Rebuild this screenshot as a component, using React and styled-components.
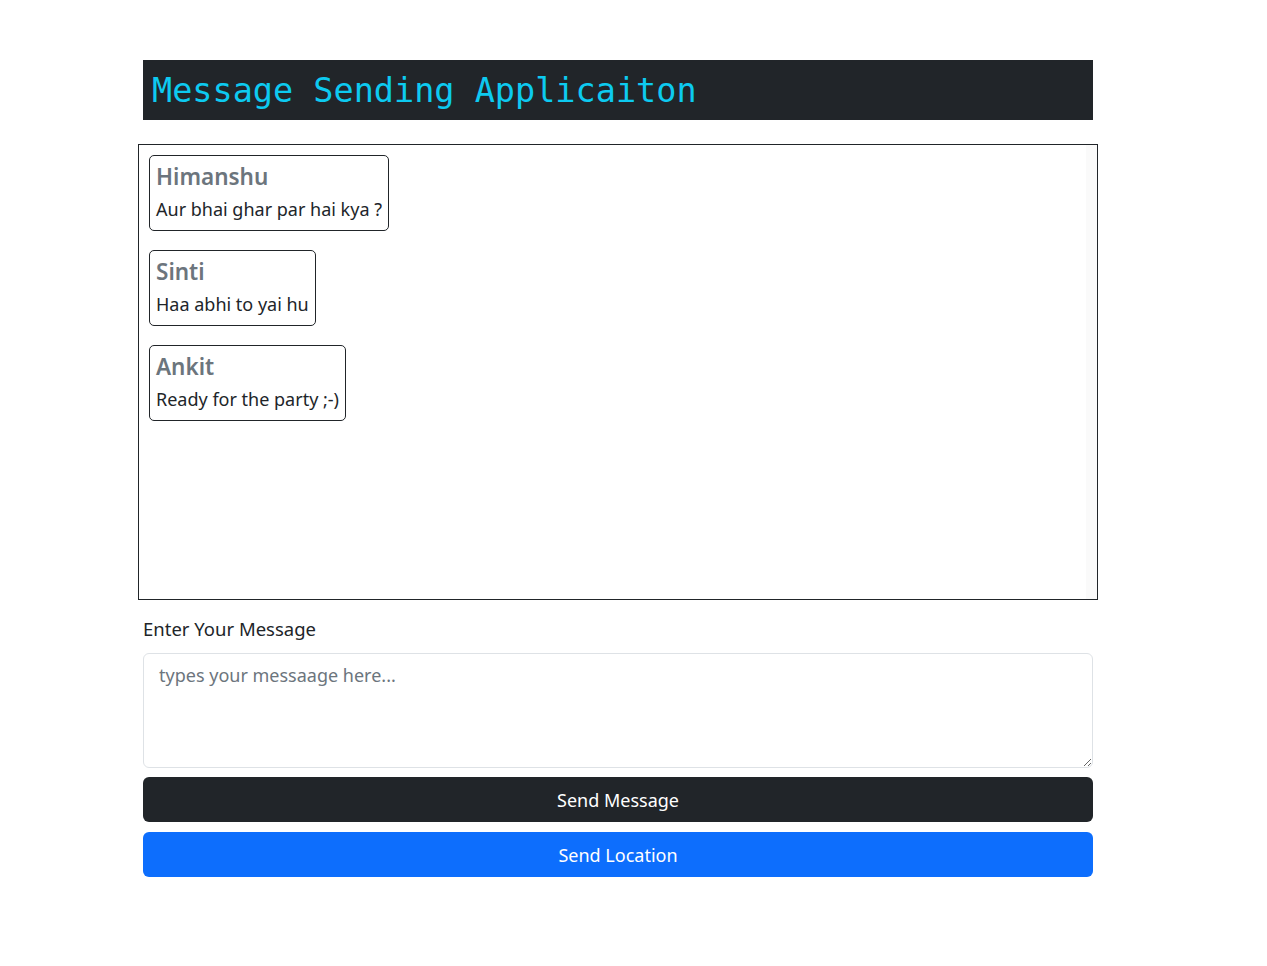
import React from 'react';
import styled, { createGlobalStyle } from 'styled-components';

const GlobalStyle = createGlobalStyle`
  body {
    margin: 0;
    background: #fff;
    font-family: "Noto Sans", "Open Sans", sans-serif;
    color: #212529;
  }
  * { box-sizing: border-box; }
`;

const messages = [
  { name: 'Himanshu', text: 'Aur bhai ghar par hai kya ?' },
  { name: 'Sinti', text: 'Haa abhi to yai hu' },
  { name: 'Ankit', text: 'Ready for the party ;-)' },
];

const App = () => {
  return (
    <>
      <GlobalStyle />
      <Page>
        <Header>
          <Title>Message Sending Applicaiton</Title>
        </Header>
        <ChatBox>
          {messages.map((m) => (
            <Bubble key={m.name}>
              <Name>{m.name}</Name>
              <Text>{m.text}</Text>
            </Bubble>
          ))}
        </ChatBox>
        <Form>
          <Label htmlFor="msg">Enter Your Message</Label>
          <TextArea id="msg" placeholder="types your messaage here..." />
          <Button $variant="dark">Send Message</Button>
          <Button $variant="primary">Send Location</Button>
        </Form>
      </Page>
    </>
  );
};

const Page = styled.div`
  width: 960px;
  margin-left: 138px;
  padding-top: 60px;
  display: flex;
  flex-direction: column;
`;

const Header = styled.div`
  margin: 0 5px;
  height: 60px;
  background: #212529;
  display: flex;
  align-items: center;
  padding: 2px 0 0 9px;
`;

const Title = styled.h1`
  margin: 0;
  font-family: "DejaVu Sans Mono", monospace;
  font-weight: 400;
  font-size: 33.5px;
  color: #0dcaf0;
  line-height: 1;
`;

const ChatBox = styled.div`
  margin-top: 24px;
  height: 456px;
  border: 1px solid #212529;
  padding: 10px;
  overflow-y: auto;
  display: flex;
  flex-direction: column;
  align-items: flex-start;
  gap: 19px;
  /* faint scrollbar track along the right edge */
  box-shadow: inset -11px 0 0 #fafafa;
`;

const Bubble = styled.div`
  border: 1px solid #212529;
  border-radius: 5px;
  padding: 6px 6px 7px;
  display: flex;
  flex-direction: column;
`;

const Name = styled.div`
  font-size: 22.5px;
  font-weight: 600;
  color: #6c757d;
  line-height: 29px;
`;

const Text = styled.div`
  font-size: 18px;
  line-height: 27px;
  margin-top: 5px;
`;

const Form = styled.div`
  margin: 0 5px;
  display: flex;
  flex-direction: column;
`;

const Label = styled.label`
  margin-top: 15px;
  font-size: 18.5px;
  line-height: 27px;
`;

const TextArea = styled.textarea`
  margin-top: 11px;
  height: 115px;
  border: 1px solid #dee2e6;
  border-radius: 6px;
  padding: 8px 15px;
  font-family: inherit;
  font-size: 18px;
  line-height: 27px;
  color: #212529;
  outline: none;
  resize: vertical;

  &::placeholder {
    color: #6c757d;
  }
`;

const Button = styled.button`
  margin-top: ${(p) => (p.$variant === 'dark' ? '9px' : '10px')};
  height: 45px;
  border: none;
  border-radius: 6px;
  font-family: inherit;
  font-size: 18px;
  color: #fff;
  background: ${(p) => (p.$variant === 'dark' ? '#212529' : '#0d6efd')};
  cursor: pointer;
`;

export default App;
